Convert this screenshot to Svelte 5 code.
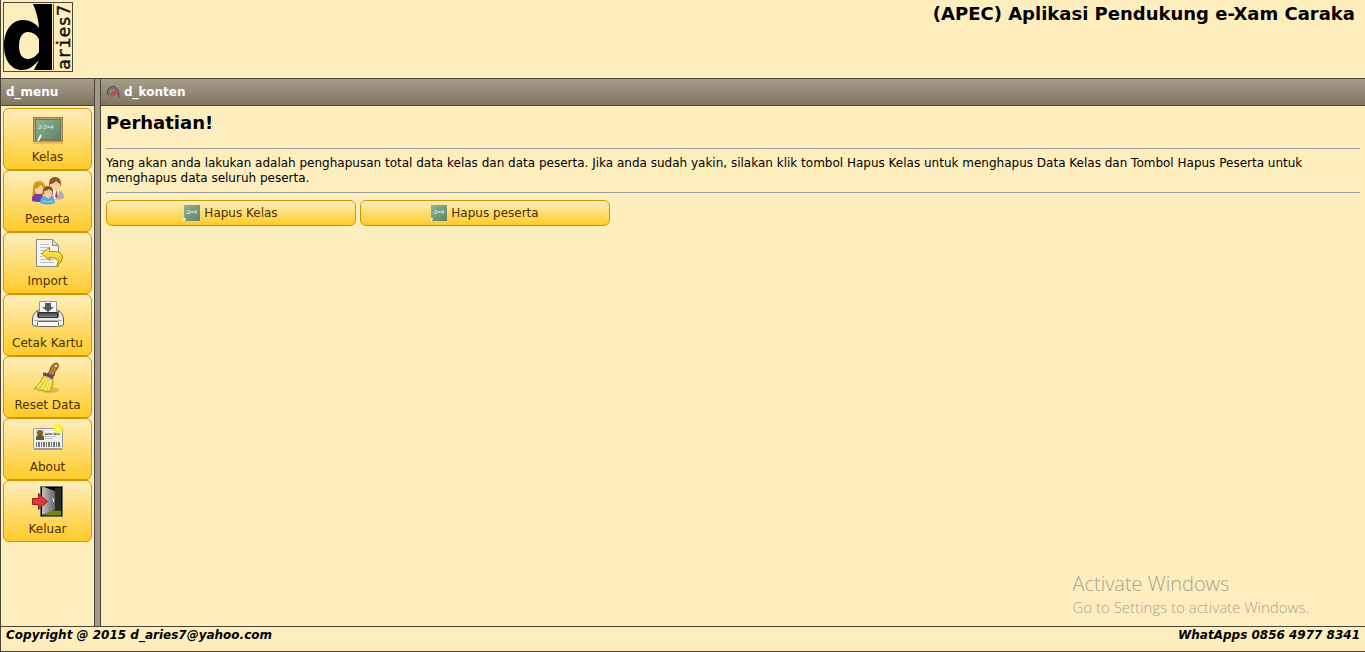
<script lang="ts">
  type MenuItem = { id: string; label: string };

  const menu: MenuItem[] = [
    { id: "kelas", label: "Kelas" },
    { id: "peserta", label: "Peserta" },
    { id: "import", label: "Import" },
    { id: "cetak", label: "Cetak Kartu" },
    { id: "reset", label: "Reset Data" },
    { id: "about", label: "About" },
    { id: "keluar", label: "Keluar" },
  ];

  const actions: string[] = ["Hapus Kelas", "Hapus peserta"];

  let selected = $state("");
</script>

<svg class="defs" width="0" height="0" aria-hidden="true">
  <defs>
    <linearGradient id="boardFill" x2="1" y2="1">
      <stop offset="0" stop-color="#8fb292" />
      <stop offset="1" stop-color="#5b8568" />
    </linearGradient>
    <linearGradient id="gold" y2="1" x2="0">
      <stop offset="0" stop-color="#fff06a" />
      <stop offset="1" stop-color="#e6bd13" />
    </linearGradient>
    <linearGradient id="door" x2="1">
      <stop offset="0" stop-color="#c2c2c2" />
      <stop offset="1" stop-color="#666" />
    </linearGradient>
    <linearGradient id="slot" y2="1" x2="0">
      <stop offset="0" stop-color="#34383a" />
      <stop offset="1" stop-color="#8c9193" />
    </linearGradient>
    <radialGradient id="glow">
      <stop offset="0" stop-color="#fffde0" />
      <stop offset="0.4" stop-color="#fff01c" />
      <stop offset="1" stop-color="#fff01c" stop-opacity="0" />
    </radialGradient>
  </defs>
</svg>

<div class="page">
  <header>
    <svg class="logo" viewBox="0 0 70 70" role="img" aria-label="d aries7">
      <rect x="0.5" y="0.5" width="69" height="69" fill="none" stroke="#4f483c" />
      <path
        fill="#000"
        fill-rule="evenodd"
        d="M30 2H49V68H31L36 58Q28 68 19 68C8 68 1 58 1 44C1 28 9 18 20 18Q30 18 36 26Q35 13 30 2ZM25 30C19 30 16 36 16 44C16 52 19 57 25 57Q31 57 36 50V37Q32 30 25 30Z"
      />
      <path d="M50.5 2v66" stroke="#5d5544" />
      <text x="-68" y="67" transform="rotate(-90)">aries7</text>
    </svg>
    <h1>(APEC) Aplikasi Pendukung e-Xam Caraka</h1>
  </header>

  <div class="body">
    <aside>
      <h2 class="bar">d_menu</h2>
      <nav>
        {#each menu as item}
          <button class="btn menu-btn" onclick={() => (selected = item.id)}>
            <svg viewBox="0 0 32 32" aria-hidden="true">
              {#if item.id == "kelas"}
                <path d="M1 28h30v2h-30z" fill="#a4843e" opacity="0.3" />
                <rect x="1" y="3" width="30" height="25" fill="#9c7d51" />
                <rect x="2" y="4" width="28" height="22" fill="#c0a173" />
                <rect
                  x="3.500"
                  y="5.500"
                  width="25"
                  height="20"
                  fill="url(#boardFill)"
                  stroke="#5f7a5f"
                />
                <text class="chalk" x="6" y="15">2-2=4</text>
                <path d="M6 27l3-6" stroke="#f4f4ee" stroke-width="2" />
                <path d="M1 27.500h30" stroke="#b98d55" />
              {:else if item.id == "peserta"}
                <path d="M0 19q1-2 1-6q0-8 6-8t7 8q0 4 1 6z" fill="#d69a18" />
                <path d="M3 13q4-1 6-4q2 2 2 4q0 5-4 5t-4-5z" fill="#f9d0a0" />
                <path d="M0 25q-1-7 5-7h5l3 7q-7 2-13 0z" fill="#7440a8" />
                <path d="M19 23q-1-9 6-9q7 1 7 8q-6 3-13 1z" fill="#a9a9b8" />
                <path d="M21 14h6l-1 9h-4z" fill="#fff" />
                <path d="M24 15h1l1 6l-1 2l-2-2z" fill="#d04040" />
                <path d="M17 8q0-7 6-7t6 7l-1 3h-10z" fill="#8a5a2b" />
                <path d="M18 8q4 0 6-3q2 2 4 3q0 7-5 7t-5-7z" fill="#f9d0a4" />
                <path d="M8 27q0-7 5-7h5q5 0 5 7q-7 3-15 0z" fill="#5ba6df" />
                <path d="M13 20l3 3l3-3z" fill="#f8c999" />
                <path d="M11 16q0-6 5-6t5 6l-1 2h-8z" fill="#81522b" />
                <path d="M12 15q3 0 5-2q2 2 3 2q0 6-4 6t-4-6z" fill="#f8c999" />
                <path d="M10 25q6 2 11 0" fill="none" stroke="#a2d4f6" />
              {:else if item.id == "import"}
                <path d="M4.500 1.500h16l6 6v21h-22z" fill="#f4f4f2" stroke="#8a8a86" />
                <path d="M20.500 1.500v6h6z" fill="#dededb" stroke="#8a8a86" />
                <path
                  d="M8 6.500h9M8 9.500h10M8 12.500h6M8 15.500h2M8 18.500h3M8 21.500h14M8 24.500h14"
                  stroke="#c0c0bc"
                />
                <path
                  d="M9.500 15.500l8-6v4h5q8 0 8 6q0 5-6 8q3-4 1-6q-2-2-8-2v3z"
                  fill="url(#gold)"
                  stroke="#b58d00"
                />
              {:else if item.id == "cetak"}
                <path d="M2 15l4-5h20l4 5z" fill="#c9c9c9" stroke="#777" />
                <path d="M7.500 1.500h17v11h-17z" fill="#fafafa" stroke="#999" />
                <path d="M13 3h6v4h3l-6 5l-6-5h3z" fill="#5a5a5a" />
                <path
                  d="M0.500 19q0-4 3-7l2-1v6h21v-6l2 1q3 3 3 7v5q0 2-2 2h-27q-2 0-2-2z"
                  fill="#ececec"
                  stroke="#666"
                />
                <path d="M6.500 12.500h19v5h-19z" fill="url(#slot)" stroke="#303335" />
                <path d="M2 20.500h28" stroke="#b4b4b4" />
                <rect
                  x="5.500"
                  y="21.500"
                  width="21"
                  height="5"
                  rx="1"
                  fill="#fafafa"
                  stroke="#666"
                />
              {:else if item.id == "reset"}
                <ellipse cx="18" cy="28" rx="9" ry="3" fill="#a58430" opacity="0.4" />
                <path
                  d="M16 12q2-3 3-7q2-4 6-4q3 2 0 6q-3 3-3 7z"
                  fill="#bf7b35"
                  stroke="#754516"
                />
                <circle cx="24" cy="4" r="1" fill="#fff" />
                <path
                  d="M12 13l9 3q1 7-3 14l-3-1l-2 1l-3-2l-3 1l-2-2l-3 0q7-6 10-14z"
                  fill="#e5d437"
                  stroke="#b9a218"
                />
                <path
                  d="M13 16l-7 9M15 17l-5 10M17 18l-4 10M19 18l-3 10"
                  stroke="#fff89a"
                />
                <path d="M11 12q5 0 10 4" fill="none" stroke="#65457f" stroke-width="3" />
              {:else if item.id == "about"}
                <path d="M2 25h29v1H2z" fill="#8d7b4b" opacity="0.6" />
                <rect
                  x="1.500"
                  y="4.500"
                  width="29"
                  height="20"
                  rx="1"
                  fill="#f0f0f0"
                  stroke="#999"
                />
                <rect x="4" y="6" width="8" height="10" fill="#d3d0c4" />
                <circle cx="8" cy="9" r="3" fill="#8b5a30" />
                <path d="M4 16q-1-5 4-5t4 5z" fill="#4d6620" />
                <text class="badge-name" x="13" y="11">John Doe</text>
                <path d="M13 12.500h11M13 14.500h8" stroke="#c4c4c4" />
                <path
                  d="M4 20.500h24"
                  stroke="#777"
                  stroke-width="5"
                  stroke-dasharray="1 1 2 1"
                />
                <circle cx="26" cy="5" r="6" fill="url(#glow)" />
              {:else}
                <rect x="8.500" y="0.500" width="22" height="30" fill="#000" stroke="#77704f" />
                <path d="M10 29.500l10-5h9v5z" fill="#7b8300" />
                <rect x="23" y="2" width="6" height="22" fill="#2b2b2b" />
                <path d="M10 1h2l11 4v19l-13 5z" fill="url(#door)" />
                <path d="M20 13h1.500v3" fill="none" stroke="#eee" />
                <path
                  d="M0.500 12.500h6v-5l9 8l-9 8v-5h-6z"
                  fill="#d63a3e"
                  stroke="#981b1b"
                />
              {/if}
            </svg>
            <span>{item.label}</span>
          </button>
        {/each}
      </nav>
    </aside>

    <div class="splitter"></div>

    <main>
      <h2 class="bar">
        <svg class="bar-icon" viewBox="0 0 16 16" aria-hidden="true">
          <path d="M2 12q-3-5 1-8q5-4 8 1q2 3 2 7l-3-2z" fill="#77736a" />
          <path d="M2 11q-2-4 1-7q5-4 8 1q2 3 2 8" fill="none" stroke="#504d47" />
          <path d="M4 9q0-3 4-3" fill="none" stroke="#a09b90" />
          <path d="M2 13L14 5l-5 7z" fill="#d8434c" />
        </svg>
        d_konten
      </h2>
      <section>
        <h3>Perhatian!</h3>
        <hr />
        <p>
          Yang akan anda lakukan adalah penghapusan total data kelas dan data peserta. Jika
          anda sudah yakin, silakan klik tombol Hapus Kelas untuk menghapus Data Kelas dan
          Tombol Hapus Peserta untuk menghapus data seluruh peserta.
        </p>
        <hr />
        <div class="actions">
          {#each actions as action}
            <button class="btn action-btn">
              <!-- Blackboard close up, without its frame -->
              <svg viewBox="0 0 16 16" aria-hidden="true">
                <rect width="16" height="16" fill="url(#boardFill)" />
                <text class="chalk" x="1" y="9">-2=4</text>
                <path d="M0 16l1-3" stroke="#f4f4ee" stroke-width="2" />
              </svg>
              {action}
            </button>
          {/each}
        </div>
      </section>
    </main>
  </div>

  <footer>
    <span>Copyright @ 2015 d_aries7@yahoo.com</span>
    <span>WhatApps 0856 4977 8341</span>
  </footer>

  <div class="watermark">
    <strong>Activate Windows</strong>
    <span>Go to Settings to activate Windows.</span>
  </div>
</div>

<style>
  :global(body) {
    margin: 0;
    background: #feeebd;
  }

  .defs {
    position: absolute;
  }

  .page {
    position: relative;
    box-sizing: border-box;
    min-height: 100vh;
    display: flex;
    flex-direction: column;
    border-left: 1px solid #494437;
    border-bottom: 1px solid #494437;
    background: #feeebd;
    color: #000;
    font-family: Verdana, "DejaVu Sans", sans-serif;
    font-size: 12px;
    line-height: 15px;
  }

  h1,
  h2,
  h3,
  p {
    margin: 0;
  }

  header {
    display: flex;
    justify-content: space-between;
    align-items: flex-start;
    padding: 2px 10px 6px 2px;
  }

  .logo {
    width: 70px;
    height: 70px;
    overflow: visible;
  }

  .logo text {
    font-family: "DejaVu Sans Mono", monospace;
    font-size: 18px;
    fill: #111;
    stroke: #111;
    stroke-width: 0.4;
  }

  .chalk {
    font-family: "Liberation Sans", Arial, sans-serif;
    font-size: 6px;
    fill: #f0f8ee;
  }

  .badge-name {
    font-size: 3px;
    font-weight: bold;
    fill: #222;
  }

  h1,
  h3 {
    font-size: 18px;
    line-height: 24px;
  }

  .body {
    flex: 1;
    display: flex;
  }

  aside {
    width: 93px;
    border-right: 1px solid #494437;
  }

  .splitter {
    width: 5px;
    background: #a49a87;
    border-top: 1px solid #494437;
  }

  main {
    flex: 1;
    border-left: 1px solid #494437;
  }

  .bar {
    display: flex;
    align-items: center;
    gap: 2px;
    height: 26px;
    padding: 0 5px;
    border-top: 1px solid #494437;
    border-bottom: 1px solid #494437;
    background: linear-gradient(#a69d8a, #807562);
    color: #fff;
    font-size: 12px;
  }

  .bar-icon {
    width: 16px;
    height: 16px;
  }

  nav {
    display: flex;
    flex-direction: column;
    padding: 2px;
  }

  .btn {
    display: flex;
    align-items: center;
    justify-content: center;
    border: 1px solid #d19405;
    border-radius: 6px;
    background: linear-gradient(#feeebd, #ffcb29);
    color: #4c3000;
    font-family: inherit;
    font-size: 12px;
    line-height: 15px;
    cursor: pointer;
  }

  .menu-btn {
    flex-direction: column;
    gap: 4px;
    height: 62px;
    padding: 0;
  }

  .menu-btn svg {
    width: 32px;
    height: 32px;
  }

  section {
    padding: 5px;
  }

  hr {
    margin: 6px 0 7px;
    border: 0;
    border-top: 1px solid #999;
  }

  h3 + hr {
    margin-top: 13px;
  }

  .actions {
    display: flex;
    flex-wrap: wrap;
    gap: 4px;
  }

  .action-btn {
    width: 250px;
    height: 26px;
    gap: 4px;
    padding: 0;
  }

  .action-btn svg {
    width: 16px;
    height: 16px;
    overflow: visible;
  }

  footer {
    display: flex;
    justify-content: space-between;
    height: 23px;
    padding: 1px 5px 0;
    border-top: 1px solid #494437;
    font-weight: bold;
    font-style: italic;
  }

  /* Lies over the content, just above the footer */
  .watermark {
    position: absolute;
    right: 56px;
    bottom: 34px;
    display: flex;
    flex-direction: column;
    color: #a8a496;
    font-family: "Segoe UI", "Open Sans", sans-serif;
    font-size: 15px;
    font-weight: 300;
    line-height: 20px;
    pointer-events: none;
  }

  .watermark strong {
    font-size: 20px;
    font-weight: 300;
    line-height: 26px;
  }
</style>
